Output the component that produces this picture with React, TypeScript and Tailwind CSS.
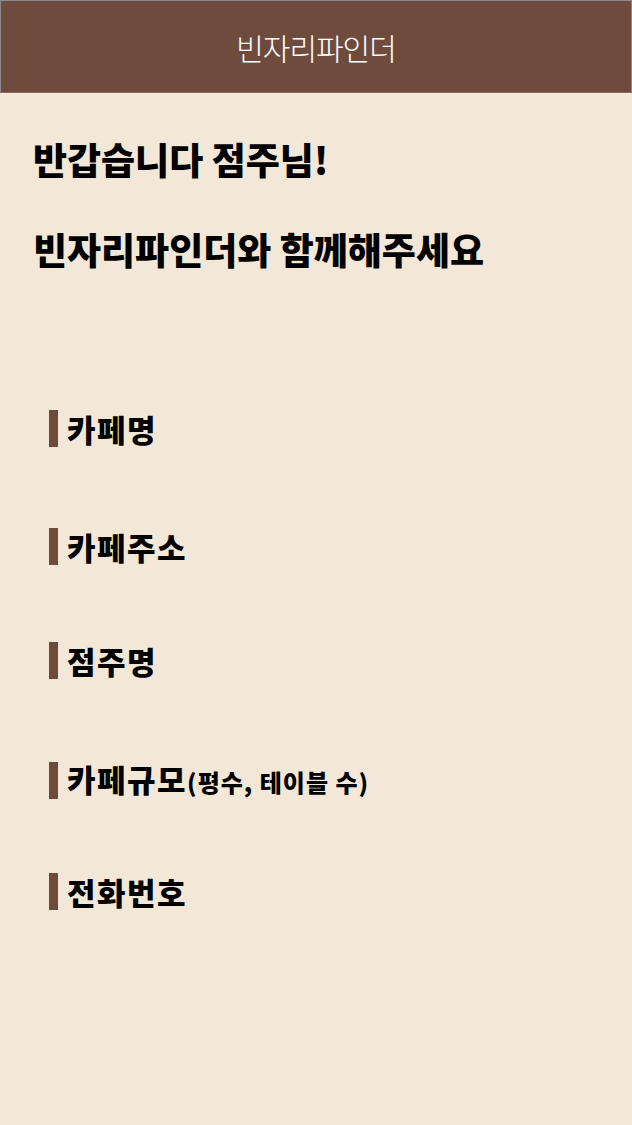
import React from "react";

const KR = { fontFamily: '"Noto Sans CJK KR", "Noto Sans", sans-serif' };

function Label({ children, extra, mt }: { children: React.ReactNode; extra?: string; mt: string }) {
  return (
    <div className={`flex items-center ${mt}`}>
      <div className="w-[9px] h-[37px] bg-[#6f4b3e]" />
      <div className="ml-[9px] flex items-baseline">
        <span className="text-[31px] leading-[37px] font-black text-black tracking-[1.5px]">{children}</span>
        {extra && <span className="text-[24px] font-black text-black tracking-[1px]">{extra}</span>}
      </div>
    </div>
  );
}

export default function App() {
  return (
    <div className="w-[632px] h-[1125px] bg-[#f3e7d7] overflow-hidden" style={KR}>
      <header className="h-[93px] bg-[#6f4b3e] border border-[#8a8a8a] border-b-[#8c6a5c] flex items-center justify-center">
        <h1 className="text-white text-[30px] font-light tracking-[-1px] leading-none">빈자리파인더</h1>
      </header>
      <div className="pl-[33px] pt-[38px]">
        <p className="text-[37px] font-black text-black leading-[56px] tracking-[0px]">반갑습니다 점주님!</p>
        <p className="text-[37px] font-black text-black leading-[56px] tracking-[0px] mt-[34px]">빈자리파인더와 함께해주세요</p>
      </div>
      <div className="pl-[49px]">
        <Label mt="mt-[133px]">카페명</Label>
        <Label mt="mt-[81px]">카페주소</Label>
        <Label mt="mt-[77px]">점주명</Label>
        <Label mt="mt-[81px]" extra="(평수, 테이블 수)">카페규모</Label>
        <Label mt="mt-[73px]">전화번호</Label>
      </div>
    </div>
  );
}
